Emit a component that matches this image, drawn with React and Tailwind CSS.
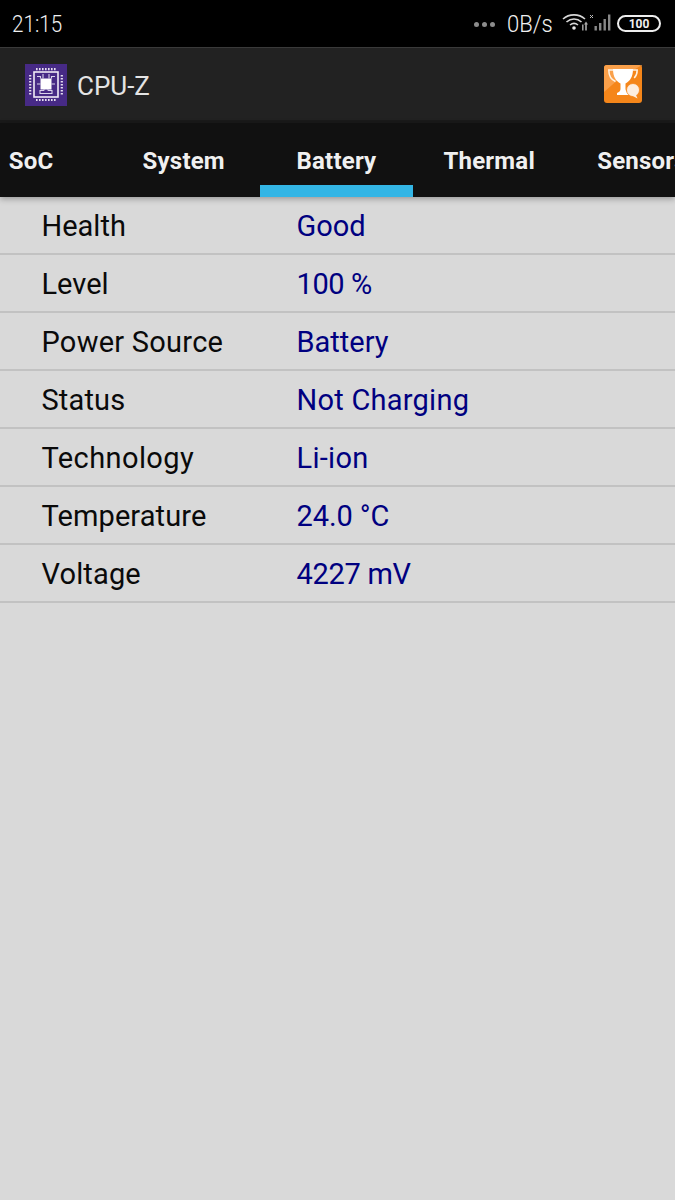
import { useState } from 'react'

const rows = [
  ['Health', 'Good', 'tracking-normal', 'tracking-normal'],
  ['Level', '100 %', 'tracking-normal', 'tracking-[-0.4px]'],
  ['Power Source', 'Battery', 'tracking-[0.25px]', 'tracking-normal'],
  ['Status', 'Not Charging', 'tracking-[0.15px]', 'tracking-[0.25px]'],
  ['Technology', 'Li-ion', 'tracking-[0.4px]', 'tracking-[0.3px]'],
  ['Temperature', '24.0 °C', 'tracking-[0.1px]', 'tracking-[-0.1px]'],
  ['Voltage', '4227 mV', 'tracking-[0.15px]', 'tracking-[-0.3px]'],
]

const tabs = ['SoC', 'System', 'Battery', 'Thermal', 'Sensors']

function StatusIcons() {
  return (
    <svg width="50" height="20" viewBox="0 0 50 20" className="block">
      <g transform="translate(1 -2.500)">
        <g fill="none" stroke="#d8d8d8" strokeWidth="1.600">
          <path d="M1 7.500C7 2 17 2 23 7.500" />
          <path d="M4.500 10.500C9 6.500 15 6.500 19.500 10.500" />
          <path d="M8 13.500C10.500 11.500 13.500 11.500 16 13.500" />
        </g>
        <circle cx="12" cy="16.500" r="1.800" fill="#e8e8e8" />
        <rect x="20" y="13" width="1.600" height="6" fill="#999" />
        <path d="M24 10l2 3h-1.200v6h-1.600v-6H22z" fill="#aaa" />
      </g>
      <path d="M29 1l3 3M32 1l-3 3" stroke="#bbb" strokeWidth="1" />
      <rect x="33.500" y="12" width="2.400" height="4.500" fill="#888" />
      <rect x="38" y="9" width="2.400" height="7.500" fill="#888" />
      <rect x="42.500" y="5" width="2.400" height="11.500" fill="#888" />
      <rect x="47" y="0.500" width="2.400" height="16" fill="#888" />
    </svg>
  )
}

function CpuLogo() {
  return (
    <svg width="42" height="42" viewBox="0 0 42 42" className="block">
      <rect width="42" height="42" fill="#472a86" />
      <rect x="9" y="8" width="24" height="25" fill="none" stroke="#efeaf6" strokeWidth="1.600" />
      <rect x="15.500" y="14.500" width="11" height="11" fill="#ffffff" />
      <g stroke="#d9d2ea" strokeWidth="1.100" fill="none">
        <path d="M12 12.500h3.500v2M30 12.500h-3.500v2M18 10v4.500M24 10v4.500M12 20h3.500M26.500 20H30" />
        <path d="M15 30v-3.500h3.500l1-1M27 30v-3.500h-3.500l-1-1M15 29.500h12" />
      </g>
      <g stroke="#e6e0f0" strokeWidth="2.200" strokeDasharray="1.600 1.400">
        <path d="M11 5.200h20M11 36h20M5.200 11v20M36.800 11v20" />
      </g>
    </svg>
  )
}

function TrophyIcon() {
  return (
    <svg width="38" height="38" viewBox="0 0 38 38" className="block">
      <rect width="38" height="38" rx="3" fill="#f5861a" />
      <path d="M0 27L16 13 38 0V3Q38 0 35 0H3Q0 0 0 3z" fill="#faa04a" />
      <path d="M9 5H4.800c0 5.500 2 9.500 6.700 11.500M29 5h4.200c0 3-1 6-3 8" fill="none" stroke="#fff1e0" strokeWidth="1.500" />
      <path d="M9 4h20c0 8-3 12-7.500 14.500V24c0 2 1.500 3 3.500 4v2H13v-2c2-1 3.500-2 3.500-4v-5.500C12 16 9 12 9 4z" fill="#ffffff" />
      <circle cx="29" cy="25" r="6.500" fill="#fdeee0" stroke="#f5861a" strokeWidth="0.800" />
      <path d="M27 30l5 0 1.500 3.500z" fill="#fdeee0" />
    </svg>
  )
}

export default function App() {
  const [active] = useState('Battery')

  return (
    <div className="flex h-[1200px] w-[675px] flex-col overflow-hidden bg-[#d9d9d9] font-['Roboto',sans-serif]">
      <div className="flex h-[47px] shrink-0 items-center justify-between bg-black pl-3 pr-[14px] text-[#f0f0f0]">
        <span className="origin-left scale-x-[0.86] text-[24px] font-light leading-none">21:15</span>
        <div className="flex items-center">
          <div className="mr-[12px] mt-[1px] flex gap-[3px]">
            <span className="h-[5px] w-[5px] rounded-full bg-[#8c8c8c]" />
            <span className="h-[5px] w-[5px] rounded-full bg-[#8c8c8c]" />
            <span className="h-[5px] w-[5px] rounded-full bg-[#8c8c8c]" />
          </div>
          <span className="mr-[9px] w-[45px] origin-left scale-x-[0.92] whitespace-nowrap text-[24px] font-light leading-none">0B/s</span>
          <StatusIcons />
          <div className="ml-[6px] flex h-[17px] w-[44px] items-center justify-center rounded-full border-2 border-[#eeeeee] text-[12px] font-bold leading-none">
            100
          </div>
        </div>
      </div>

      <div className="flex h-[73px] shrink-0 items-center justify-between border-t border-[#3a3a3a] bg-[#222222] pl-[25px] pr-[33px]">
        <div className="flex items-center gap-[10px] pt-[1px]">
          <CpuLogo />
          <span className="pt-[2px] text-[26px] leading-none text-[#e4e4e4]">CPU-Z</span>
        </div>
        <TrophyIcon />
      </div>

      <div className="h-[3px] shrink-0 bg-[#1a1a1a]" />

      <div className="relative z-10 flex h-[74px] shrink-0 overflow-hidden bg-[#111111] shadow-[0_2px_6px_rgba(0,0,0,0.3)]">
        <div className="ml-[-45.4px] flex">
          {tabs.map((tab) => (
            <div
              key={tab}
              className={`flex h-[74px] w-[152.75px] shrink-0 justify-center pt-[22px] text-[24px] font-bold leading-[32px] tracking-[0.2px] text-[#f0f0f0] ${
                tab === active ? 'border-b-[12px] border-[#33b5e5]' : ''
              }`}
            >
              {tab}
            </div>
          ))}
        </div>
      </div>

      <div className="flex flex-col">
        {rows.map(([label, value, labelTracking, valueTracking]) => (
          <div key={label} className="flex h-[58px] items-center border-b-2 border-[#c2c2c2] pl-[41.5px] pt-[2px] text-[29px] leading-none">
            <span className={`w-[255px] text-[#0a0a0a] ${labelTracking}`}>{label}</span>
            <span className={`text-[#000080] ${valueTracking}`}>{value}</span>
          </div>
        ))}
      </div>
    </div>
  )
}
